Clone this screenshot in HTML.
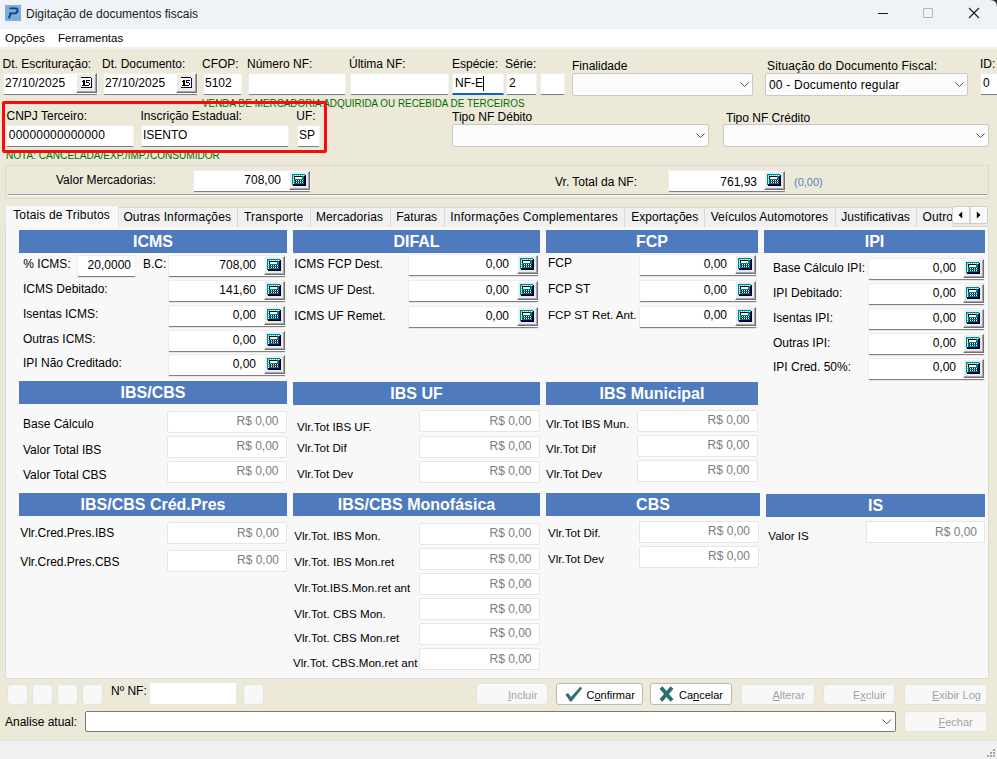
<!DOCTYPE html><html><head><meta charset="utf-8"><style>
html,body{margin:0;padding:0;}
body{width:997px;height:759px;overflow:hidden;position:relative;background:#ece9d8;font-family:"Liberation Sans", sans-serif;}
.t{position:absolute;white-space:nowrap;font-family:"Liberation Sans", sans-serif;}
.b{position:absolute;}
u{text-decoration:underline;text-underline-offset:1px;}
</style></head><body>
<svg width="0" height="0" style="position:absolute">
<defs>
<g id="calc"><rect x="0" y="0" width="13" height="11" fill="#008080"/><rect x="1" y="1" width="12" height="1" fill="#00ffff"/><rect x="1" y="1" width="1" height="1" fill="#fff"/><rect x="3" y="1" width="1" height="1" fill="#fff"/><rect x="5" y="1" width="1" height="1" fill="#fff"/><rect x="7" y="1" width="1" height="1" fill="#fff"/><rect x="9" y="1" width="1" height="1" fill="#fff"/><rect x="11" y="1" width="1" height="1" fill="#fff"/><rect x="1" y="1" width="1" height="9" fill="#00ffff"/><rect x="1" y="3" width="1" height="1" fill="#fff"/><rect x="1" y="5" width="1" height="1" fill="#fff"/><rect x="1" y="7" width="1" height="1" fill="#fff"/><rect x="1" y="9" width="1" height="1" fill="#fff"/><rect x="2" y="2" width="8" height="1" fill="#000"/><rect x="2" y="2" width="1" height="3" fill="#000"/><rect x="3" y="3" width="7" height="2" fill="#fff"/><rect x="3" y="6" width="9" height="1" fill="#000"/><rect x="4" y="6" width="1" height="1" fill="#fff"/><rect x="6" y="6" width="1" height="1" fill="#fff"/><rect x="8" y="6" width="1" height="1" fill="#fff"/><rect x="10" y="6" width="1" height="1" fill="#fff"/><rect x="3" y="8" width="9" height="1" fill="#000"/><rect x="4" y="8" width="1" height="1" fill="#fff"/><rect x="6" y="8" width="1" height="1" fill="#fff"/><rect x="8" y="8" width="1" height="1" fill="#fff"/><rect x="10" y="8" width="1" height="1" fill="#fff"/><rect x="1" y="10" width="12" height="1" fill="#000080"/><rect x="12" y="2" width="1" height="9" fill="#000080"/><rect x="13" y="1" width="1" height="11" fill="#000"/><rect x="1" y="11" width="12" height="1" fill="#000"/></g>
<g id="cal15">
<rect x="0" y="0" width="11" height="11" fill="#fff"/>
<rect x="0" y="0" width="10" height="1" fill="#000"/>
<rect x="10" y="1" width="1" height="10" fill="#00007a"/>
<rect x="0" y="10" width="11" height="1" fill="#000"/>
<rect x="2" y="10" width="1" height="1" fill="#1a1aa0"/><rect x="5" y="10" width="1" height="1" fill="#1a1aa0"/><rect x="8" y="10" width="1" height="1" fill="#1a1aa0"/>
<g fill="#000"><rect x="2" y="3" width="2" height="5"/><rect x="1" y="4" width="1" height="1"/><rect x="1" y="8" width="4" height="1"/><rect x="5" y="3" width="4" height="1"/><rect x="5" y="3" width="1" height="3"/><rect x="5" y="5" width="3" height="1"/><rect x="8" y="6" width="1" height="2"/><rect x="7" y="5" width="1" height="1"/><rect x="5" y="8" width="3" height="1"/></g>
</g>
</defs></svg>

<div class="b" style="left:0px;top:0px;width:997px;height:29px;background:#eff3f8;"></div>
<svg class="b" style="left:5px;top:5px" width="16" height="16"><rect width="16" height="16" fill="#7aaedb"/><path d="M5.3 3.4 L10.5 3.4 C12.6 3.4 12.8 4.6 12.4 6.2 C12 7.8 10.8 8.4 9 8.4 L5 8.4 M6 8.4 L4 12.6" fill="none" stroke="#0d3f86" stroke-width="1.9" stroke-linecap="round" stroke-linejoin="round"/></svg>
<div class="t " style="left:26px;top:6.50px;font-size:12px;line-height:14px;color:#1a1a1a;font-weight:normal;">Digitação de documentos fiscais</div>
<div class="b" style="left:878px;top:13px;width:10px;height:1px;background:#1a1a1a;"></div>
<div class="b" style="left:923px;top:8px;width:10px;height:10px;border:1px solid #b5b5b5;box-sizing:border-box;border-radius:1px;"></div>
<svg class="b" style="left:968px;top:7px" width="12" height="12"><path d="M1 1 L11 11 M11 1 L1 11" stroke="#1a1a1a" stroke-width="1.1"/></svg>
<svg class="b" style="left:990px;top:0px" width="7" height="7"><path d="M0 0 L7 0 L7 7 Q7 0 0 0Z" fill="#2b2b2b"/></svg>
<div class="b" style="left:0px;top:29px;width:997px;height:18px;background:#fff;"></div>
<div class="b" style="left:0px;top:47px;width:997px;height:2px;background:#efefef;"></div>
<div class="t " style="left:5px;top:32.20px;font-size:11.5px;line-height:13px;color:#000;font-weight:normal;">Opções</div>
<div class="t " style="left:58px;top:32.20px;font-size:11.5px;line-height:13px;color:#000;font-weight:normal;">Ferramentas</div>
<div class="t " style="left:2.5px;top:57.00px;font-size:12px;line-height:14px;color:#000;font-weight:normal;">Dt. Escrituração:</div>
<div class="t " style="left:102px;top:57.00px;font-size:12px;line-height:14px;color:#000;font-weight:normal;">Dt. Documento:</div>
<div class="t " style="left:202px;top:57.00px;font-size:12px;line-height:14px;color:#000;font-weight:normal;">CFOP:</div>
<div class="t " style="left:247px;top:57.00px;font-size:12px;line-height:14px;color:#000;font-weight:normal;">Número NF:</div>
<div class="t " style="left:349px;top:57.00px;font-size:12px;line-height:14px;color:#000;font-weight:normal;">Última NF:</div>
<div class="t " style="left:452px;top:57.00px;font-size:12px;line-height:14px;color:#000;font-weight:normal;">Espécie:</div>
<div class="t " style="left:505px;top:57.00px;font-size:12px;line-height:14px;color:#000;font-weight:normal;">Série:</div>
<div class="t " style="left:572px;top:59.00px;font-size:12px;line-height:14px;color:#000;font-weight:normal;">Finalidade</div>
<div class="t " style="left:767px;top:59.00px;font-size:12px;line-height:14px;color:#000;font-weight:normal;letter-spacing:0.14px;">Situação do Documento Fiscal:</div>
<div class="t " style="left:980px;top:57.00px;font-size:12px;line-height:14px;color:#000;font-weight:normal;">ID:</div>
<div class="b" style="left:3px;top:73px;width:95px;height:22px;background:#fff;border-top:1px solid #ececec;border-left:1px solid #ececec;border-right:1px solid #f2f2f2;border-bottom:1px solid #7f7f7f;box-shadow:0 1px 0 #e4e4e4;box-sizing:border-box;border-radius:2px;"></div>
<div class="b" style="left:76px;top:73px;width:21px;height:20px;background:#ebebeb;border-top:1px solid #fff;border-left:1px solid #fff;border-right:1px solid #6f6f6f;border-bottom:1px solid #6f6f6f;box-shadow:inset -1px -1px 0 #a8a8a8;box-sizing:border-box;"></div>
<svg class="b" style="left:81px;top:77px" width="12" height="12"><use href="#cal15"/></svg>
<div class="t " style="left:5px;top:76.00px;font-size:12px;line-height:14px;color:#000;font-weight:normal;">27/10/2025</div>
<div class="b" style="left:103px;top:73px;width:95px;height:22px;background:#fff;border-top:1px solid #ececec;border-left:1px solid #ececec;border-right:1px solid #f2f2f2;border-bottom:1px solid #7f7f7f;box-shadow:0 1px 0 #e4e4e4;box-sizing:border-box;border-radius:2px;"></div>
<div class="b" style="left:176px;top:73px;width:21px;height:20px;background:#ebebeb;border-top:1px solid #fff;border-left:1px solid #fff;border-right:1px solid #6f6f6f;border-bottom:1px solid #6f6f6f;box-shadow:inset -1px -1px 0 #a8a8a8;box-sizing:border-box;"></div>
<svg class="b" style="left:181px;top:77px" width="12" height="12"><use href="#cal15"/></svg>
<div class="t " style="left:105px;top:76.00px;font-size:12px;line-height:14px;color:#000;font-weight:normal;">27/10/2025</div>
<div class="b" style="left:203px;top:73px;width:39px;height:22px;background:#fff;border-top:1px solid #ececec;border-left:1px solid #ececec;border-right:1px solid #f2f2f2;border-bottom:1px solid #7f7f7f;box-shadow:0 1px 0 #e4e4e4;box-sizing:border-box;border-radius:2px;"></div>
<div class="t " style="left:205px;top:76.00px;font-size:12px;line-height:14px;color:#000;font-weight:normal;">5102</div>
<div class="b" style="left:248px;top:73px;width:98px;height:22px;background:#fff;border-top:1px solid #ececec;border-left:1px solid #ececec;border-right:1px solid #f2f2f2;border-bottom:1px solid #7f7f7f;box-shadow:0 1px 0 #e4e4e4;box-sizing:border-box;border-radius:2px;"></div>
<div class="b" style="left:350px;top:73px;width:99px;height:22px;background:#fff;border-top:1px solid #ececec;border-left:1px solid #ececec;border-right:1px solid #f2f2f2;border-bottom:1px solid #7f7f7f;box-shadow:0 1px 0 #e4e4e4;box-sizing:border-box;border-radius:2px;"></div>
<div class="b" style="left:452px;top:73px;width:52px;height:22px;background:#fff;border-top:1px solid #ececec;border-left:1px solid #ececec;border-right:1px solid #f2f2f2;border-bottom:2px solid #0f62c4;box-sizing:border-box;border-radius:2px 2px 0 0;"></div>
<div class="t " style="left:455px;top:76.00px;font-size:12px;line-height:14px;color:#000;font-weight:normal;">NF-E</div>
<div class="b" style="left:483px;top:76px;width:1px;height:15px;background:#000;"></div>
<div class="b" style="left:506px;top:73px;width:31px;height:22px;background:#fff;border-top:1px solid #ececec;border-left:1px solid #ececec;border-right:1px solid #f2f2f2;border-bottom:1px solid #7f7f7f;box-shadow:0 1px 0 #e4e4e4;box-sizing:border-box;border-radius:2px;"></div>
<div class="t " style="left:509px;top:76.00px;font-size:12px;line-height:14px;color:#000;font-weight:normal;">2</div>
<div class="b" style="left:540px;top:73px;width:25px;height:22px;background:#fff;border-top:1px solid #ececec;border-left:1px solid #ececec;border-right:1px solid #f2f2f2;border-bottom:1px solid #7f7f7f;box-shadow:0 1px 0 #e4e4e4;box-sizing:border-box;border-radius:2px;"></div>
<div class="b" style="left:572px;top:73px;width:181px;height:23px;background:#fcfcfc;border:1px solid #c9c9c9;box-sizing:border-box;border-radius:2px;"></div>
<svg class="b" style="left:739.5px;top:82.0px" width="10" height="6"><path d="M0.5 0.5 L4.5 4.5 L8.5 0.5" fill="none" stroke="#404040" stroke-width="0.9"/></svg>
<div class="b" style="left:765px;top:73px;width:203px;height:23px;background:#fcfcfc;border:1px solid #c9c9c9;box-sizing:border-box;border-radius:2px;"></div>
<svg class="b" style="left:954.5px;top:82.0px" width="10" height="6"><path d="M0.5 0.5 L4.5 4.5 L8.5 0.5" fill="none" stroke="#404040" stroke-width="0.9"/></svg>
<div class="t " style="left:769px;top:78.30px;font-size:12px;line-height:14px;color:#000;font-weight:normal;letter-spacing:0.2px;">00 - Documento regular</div>
<div class="b" style="left:980px;top:73px;width:20px;height:22px;background:#fff;border-top:1px solid #ececec;border-left:1px solid #ececec;border-right:1px solid #f2f2f2;border-bottom:1px solid #7f7f7f;box-shadow:0 1px 0 #e4e4e4;box-sizing:border-box;border-radius:2px;"></div>
<div class="t " style="left:983px;top:76.00px;font-size:12px;line-height:14px;color:#000;font-weight:normal;">0</div>
<div class="t " style="left:202.3px;top:96.00px;font-size:11.7px;line-height:13px;color:#006c00;font-weight:normal;transform:scaleX(0.845);transform-origin:0 0;">VENDA DE MERCADORIA ADQUIRIDA OU RECEBIDA DE TERCEIROS</div>
<div class="t " style="left:6.5px;top:109.00px;font-size:12px;line-height:14px;color:#000;font-weight:normal;">CNPJ Terceiro:</div>
<div class="t " style="left:140.5px;top:109.00px;font-size:12px;line-height:14px;color:#000;font-weight:normal;">Inscrição Estadual:</div>
<div class="t " style="left:296.3px;top:109.00px;font-size:12px;line-height:14px;color:#000;font-weight:normal;">UF:</div>
<div class="b" style="left:6px;top:125px;width:128px;height:22px;background:#fff;border-top:1px solid #ececec;border-left:1px solid #ececec;border-right:1px solid #f2f2f2;border-bottom:1px solid #7f7f7f;box-shadow:0 1px 0 #e4e4e4;box-sizing:border-box;border-radius:2px;"></div>
<div class="t " style="left:8.8px;top:128.00px;font-size:12px;line-height:14px;color:#000;font-weight:normal;letter-spacing:0.2px;">00000000000000</div>
<div class="b" style="left:141px;top:125px;width:148px;height:22px;background:#fff;border-top:1px solid #ececec;border-left:1px solid #ececec;border-right:1px solid #f2f2f2;border-bottom:1px solid #7f7f7f;box-shadow:0 1px 0 #e4e4e4;box-sizing:border-box;border-radius:2px;"></div>
<div class="t " style="left:143px;top:128.00px;font-size:12px;line-height:14px;color:#000;font-weight:normal;">ISENTO</div>
<div class="b" style="left:297px;top:125px;width:23px;height:22px;background:#fff;border-top:1px solid #ececec;border-left:1px solid #ececec;border-right:1px solid #f2f2f2;border-bottom:1px solid #7f7f7f;box-shadow:0 1px 0 #e4e4e4;box-sizing:border-box;border-radius:2px;"></div>
<div class="t " style="left:299px;top:128.00px;font-size:12px;line-height:14px;color:#000;font-weight:normal;">SP</div>
<div class="t " style="left:452px;top:110.00px;font-size:12px;line-height:14px;color:#000;font-weight:normal;">Tipo NF Débito</div>
<div class="t " style="left:726px;top:110.50px;font-size:12px;line-height:14px;color:#000;font-weight:normal;">Tipo NF Crédito</div>
<div class="b" style="left:452px;top:124px;width:257px;height:23px;background:#fcfcfc;border:1px solid #c9c9c9;box-sizing:border-box;border-radius:2px;"></div>
<svg class="b" style="left:695.5px;top:133.0px" width="10" height="6"><path d="M0.5 0.5 L4.5 4.5 L8.5 0.5" fill="none" stroke="#404040" stroke-width="0.9"/></svg>
<div class="b" style="left:723px;top:124px;width:266px;height:23px;background:#fcfcfc;border:1px solid #c9c9c9;box-sizing:border-box;border-radius:2px;"></div>
<svg class="b" style="left:975.5px;top:133.0px" width="10" height="6"><path d="M0.5 0.5 L4.5 4.5 L8.5 0.5" fill="none" stroke="#404040" stroke-width="0.9"/></svg>
<div class="t " style="left:6px;top:148.00px;font-size:11.7px;line-height:13px;color:#006c00;font-weight:normal;transform:scaleX(0.862);transform-origin:0 0;">NOTA: CANCELADA/EXP./IMP./CONSUMIDOR</div>
<div class="b" style="left:2px;top:101px;width:325px;height:52px;border:3px solid #fa0a0a;box-sizing:border-box;border-radius:2px;"></div>
<div class="b" style="left:5px;top:165px;width:984px;height:34px;border:1px solid #d9d9d6;box-sizing:border-box;"></div>
<div class="b" style="left:8px;top:194px;width:979px;height:1px;background:#9d9d9d;"></div>
<div class="b" style="left:8px;top:195px;width:979px;height:1px;background:#fff;"></div>
<div class="t " style="left:56px;top:173.00px;font-size:12px;line-height:14px;color:#000;font-weight:normal;">Valor Mercadorias:</div>
<div class="b" style="left:193px;top:170px;width:118px;height:22px;background:#fff;border-top:1px solid #ececec;border-left:1px solid #ececec;border-right:1px solid #f2f2f2;border-bottom:1px solid #7f7f7f;box-shadow:0 1px 0 #e4e4e4;box-sizing:border-box;border-radius:2px;"></div>
<div class="b" style="left:289px;top:171px;width:21px;height:19px;background:#ebebeb;border-top:1px solid #fff;border-left:1px solid #fff;border-right:1px solid #6f6f6f;border-bottom:1px solid #6f6f6f;box-shadow:inset -1px -1px 0 #a8a8a8;box-sizing:border-box;"></div>
<svg class="b" style="left:292px;top:174px" width="14" height="12"><use href="#calc"/></svg>
<div class="t" style="right:716px;top:173.00px;font-size:12px;line-height:14px;color:#000;font-weight:normal;text-align:right;">708,00</div>
<div class="t " style="left:555px;top:174.50px;font-size:12px;line-height:14px;color:#000;font-weight:normal;">Vr. Total da NF:</div>
<div class="b" style="left:668px;top:170px;width:118px;height:22px;background:#fff;border-top:1px solid #ececec;border-left:1px solid #ececec;border-right:1px solid #f2f2f2;border-bottom:1px solid #7f7f7f;box-shadow:0 1px 0 #e4e4e4;box-sizing:border-box;border-radius:2px;"></div>
<div class="b" style="left:764px;top:171px;width:21px;height:19px;background:#ebebeb;border-top:1px solid #fff;border-left:1px solid #fff;border-right:1px solid #6f6f6f;border-bottom:1px solid #6f6f6f;box-shadow:inset -1px -1px 0 #a8a8a8;box-sizing:border-box;"></div>
<svg class="b" style="left:767px;top:174px" width="14" height="12"><use href="#calc"/></svg>
<div class="t" style="right:240px;top:174.50px;font-size:12px;line-height:14px;color:#000;font-weight:normal;text-align:right;">761,93</div>
<div class="t " style="left:794px;top:176.00px;font-size:11px;line-height:13px;color:#5b82c0;font-weight:normal;">(0,00)</div>
<div class="b" style="left:5px;top:226px;width:984px;height:453px;background:#f8f8f8;border:1px solid #dadada;box-sizing:border-box;"></div>
<div class="b" style="left:5px;top:205px;width:947px;height:22px;overflow:hidden;">
<div class="b" style="left:113px;top:2px;width:120px;height:20px;background:#f0f0f0;border:1px solid #d9d9d9;border-bottom:none;box-sizing:border-box;"></div>
<div class="t" style="left:118.4px;top:5px;font-size:12px;line-height:14px;color:#000;letter-spacing:0.13px;">Outras Informações</div>
<div class="b" style="left:232px;top:2px;width:73.5px;height:20px;background:#f0f0f0;border:1px solid #d9d9d9;border-bottom:none;box-sizing:border-box;"></div>
<div class="t" style="left:239px;top:5px;font-size:12px;line-height:14px;color:#000;letter-spacing:0.18px;">Transporte</div>
<div class="b" style="left:304.5px;top:2px;width:81.0px;height:20px;background:#f0f0f0;border:1px solid #d9d9d9;border-bottom:none;box-sizing:border-box;"></div>
<div class="t" style="left:311px;top:5px;font-size:12px;line-height:14px;color:#000;letter-spacing:0.09px;">Mercadorias</div>
<div class="b" style="left:384.5px;top:2px;width:55.0px;height:20px;background:#f0f0f0;border:1px solid #d9d9d9;border-bottom:none;box-sizing:border-box;"></div>
<div class="t" style="left:391.2px;top:5px;font-size:12px;line-height:14px;color:#000;letter-spacing:0.04px;">Faturas</div>
<div class="b" style="left:438.5px;top:2px;width:181.5px;height:20px;background:#f0f0f0;border:1px solid #d9d9d9;border-bottom:none;box-sizing:border-box;"></div>
<div class="t" style="left:445.2px;top:5px;font-size:12px;line-height:14px;color:#000;letter-spacing:0.27px;">Informações Complementares</div>
<div class="b" style="left:619px;top:2px;width:81px;height:20px;background:#f0f0f0;border:1px solid #d9d9d9;border-bottom:none;box-sizing:border-box;"></div>
<div class="t" style="left:626.3px;top:5px;font-size:12px;line-height:14px;color:#000;letter-spacing:0.03px;">Exportações</div>
<div class="b" style="left:699px;top:2px;width:132px;height:20px;background:#f0f0f0;border:1px solid #d9d9d9;border-bottom:none;box-sizing:border-box;"></div>
<div class="t" style="left:705.7px;top:5px;font-size:12px;line-height:14px;color:#000;letter-spacing:0.06px;">Veículos Automotores</div>
<div class="b" style="left:830px;top:2px;width:82px;height:20px;background:#f0f0f0;border:1px solid #d9d9d9;border-bottom:none;box-sizing:border-box;"></div>
<div class="t" style="left:836.2px;top:5px;font-size:12px;line-height:14px;color:#000;letter-spacing:0.05px;">Justificativas</div>
<div class="b" style="left:911px;top:2px;width:65px;height:20px;background:#f0f0f0;border:1px solid #d9d9d9;border-bottom:none;box-sizing:border-box;"></div>
<div class="t" style="left:917.5px;top:5px;font-size:12px;line-height:14px;color:#000;letter-spacing:0.1px;">Outros</div>
</div>
<div class="b" style="left:5px;top:205px;width:114px;height:22px;background:#f8f8f8;border:1px solid #e2e2e2;border-bottom:none;box-sizing:border-box;"></div>
<div class="t " style="left:13.2px;top:208.00px;font-size:12px;line-height:14px;color:#000;font-weight:normal;letter-spacing:0.15px;">Totais de Tributos</div>
<div class="b" style="left:952px;top:206px;width:36px;height:18px;background:#fafafa;border:1px solid #cfcfcf;box-sizing:border-box;border-radius:2px;"></div>
<div class="b" style="left:969px;top:207px;width:2px;height:16px;background:#d6d6d6;"></div>
<svg class="b" style="left:958px;top:211px" width="5" height="8"><path d="M4.2 0.5 L0.5 4 L4.2 7.5Z" fill="#000"/></svg>
<svg class="b" style="left:976px;top:211px" width="5" height="8"><path d="M0.8 0.5 L4.5 4 L0.8 7.5Z" fill="#000"/></svg>
<div class="b" style="left:19px;top:230px;width:268px;height:23px;background:#4f7bbe;"></div>
<div class="t" style="left:19px;width:268px;top:233.30px;font-size:16px;line-height:18px;color:#fff;font-weight:bold;text-align:center;">ICMS</div>
<div class="t " style="left:23.3px;top:257.00px;font-size:12px;line-height:14px;color:#000;font-weight:normal;">% ICMS:</div>
<div class="b" style="left:77px;top:255px;width:59px;height:22px;background:#fff;border-top:1px solid #ececec;border-left:1px solid #ececec;border-right:1px solid #f2f2f2;border-bottom:1px solid #7f7f7f;box-shadow:0 1px 0 #e4e4e4;box-sizing:border-box;border-radius:2px;"></div>
<div class="t" style="right:866px;top:257.50px;font-size:12px;line-height:14px;color:#000;font-weight:normal;text-align:right;">20,0000</div>
<div class="t " style="left:143px;top:256.50px;font-size:12px;line-height:14px;color:#000;font-weight:normal;">B.C:</div>
<div class="b" style="left:168px;top:255px;width:118px;height:22px;background:#fff;border-top:1px solid #ececec;border-left:1px solid #ececec;border-right:1px solid #f2f2f2;border-bottom:1px solid #7f7f7f;box-shadow:0 1px 0 #e4e4e4;box-sizing:border-box;border-radius:2px;"></div>
<div class="b" style="left:264px;top:256px;width:21px;height:19px;background:#ebebeb;border-top:1px solid #fff;border-left:1px solid #fff;border-right:1px solid #6f6f6f;border-bottom:1px solid #6f6f6f;box-shadow:inset -1px -1px 0 #a8a8a8;box-sizing:border-box;"></div>
<svg class="b" style="left:267px;top:259px" width="14" height="12"><use href="#calc"/></svg>
<div class="t" style="right:741px;top:257.50px;font-size:12px;line-height:14px;color:#000;font-weight:normal;text-align:right;">708,00</div>
<div class="b" style="left:168px;top:280px;width:118px;height:22px;background:#fff;border-top:1px solid #ececec;border-left:1px solid #ececec;border-right:1px solid #f2f2f2;border-bottom:1px solid #7f7f7f;box-shadow:0 1px 0 #e4e4e4;box-sizing:border-box;border-radius:2px;"></div>
<div class="b" style="left:264px;top:281px;width:21px;height:19px;background:#ebebeb;border-top:1px solid #fff;border-left:1px solid #fff;border-right:1px solid #6f6f6f;border-bottom:1px solid #6f6f6f;box-shadow:inset -1px -1px 0 #a8a8a8;box-sizing:border-box;"></div>
<svg class="b" style="left:267px;top:284px" width="14" height="12"><use href="#calc"/></svg>
<div class="t" style="right:741px;top:282.50px;font-size:12px;line-height:14px;color:#000;font-weight:normal;text-align:right;">141,60</div>
<div class="t " style="left:23px;top:281.50px;font-size:12px;line-height:14px;color:#000;font-weight:normal;">ICMS Debitado:</div>
<div class="b" style="left:168px;top:305px;width:118px;height:22px;background:#fff;border-top:1px solid #ececec;border-left:1px solid #ececec;border-right:1px solid #f2f2f2;border-bottom:1px solid #7f7f7f;box-shadow:0 1px 0 #e4e4e4;box-sizing:border-box;border-radius:2px;"></div>
<div class="b" style="left:264px;top:306px;width:21px;height:19px;background:#ebebeb;border-top:1px solid #fff;border-left:1px solid #fff;border-right:1px solid #6f6f6f;border-bottom:1px solid #6f6f6f;box-shadow:inset -1px -1px 0 #a8a8a8;box-sizing:border-box;"></div>
<svg class="b" style="left:267px;top:309px" width="14" height="12"><use href="#calc"/></svg>
<div class="t" style="right:741px;top:307.50px;font-size:12px;line-height:14px;color:#000;font-weight:normal;text-align:right;">0,00</div>
<div class="t " style="left:23px;top:306.50px;font-size:12px;line-height:14px;color:#000;font-weight:normal;">Isentas ICMS:</div>
<div class="b" style="left:168px;top:330px;width:118px;height:22px;background:#fff;border-top:1px solid #ececec;border-left:1px solid #ececec;border-right:1px solid #f2f2f2;border-bottom:1px solid #7f7f7f;box-shadow:0 1px 0 #e4e4e4;box-sizing:border-box;border-radius:2px;"></div>
<div class="b" style="left:264px;top:331px;width:21px;height:19px;background:#ebebeb;border-top:1px solid #fff;border-left:1px solid #fff;border-right:1px solid #6f6f6f;border-bottom:1px solid #6f6f6f;box-shadow:inset -1px -1px 0 #a8a8a8;box-sizing:border-box;"></div>
<svg class="b" style="left:267px;top:334px" width="14" height="12"><use href="#calc"/></svg>
<div class="t" style="right:741px;top:332.50px;font-size:12px;line-height:14px;color:#000;font-weight:normal;text-align:right;">0,00</div>
<div class="t " style="left:23px;top:331.50px;font-size:12px;line-height:14px;color:#000;font-weight:normal;">Outras ICMS:</div>
<div class="b" style="left:168px;top:354px;width:118px;height:22px;background:#fff;border-top:1px solid #ececec;border-left:1px solid #ececec;border-right:1px solid #f2f2f2;border-bottom:1px solid #7f7f7f;box-shadow:0 1px 0 #e4e4e4;box-sizing:border-box;border-radius:2px;"></div>
<div class="b" style="left:264px;top:355px;width:21px;height:19px;background:#ebebeb;border-top:1px solid #fff;border-left:1px solid #fff;border-right:1px solid #6f6f6f;border-bottom:1px solid #6f6f6f;box-shadow:inset -1px -1px 0 #a8a8a8;box-sizing:border-box;"></div>
<svg class="b" style="left:267px;top:358px" width="14" height="12"><use href="#calc"/></svg>
<div class="t" style="right:741px;top:356.50px;font-size:12px;line-height:14px;color:#000;font-weight:normal;text-align:right;">0,00</div>
<div class="t " style="left:23px;top:355.50px;font-size:12px;line-height:14px;color:#000;font-weight:normal;">IPI Não Creditado:</div>
<div class="b" style="left:293px;top:230px;width:247px;height:23px;background:#4f7bbe;"></div>
<div class="t" style="left:293px;width:247px;top:233.30px;font-size:16px;line-height:18px;color:#fff;font-weight:bold;text-align:center;">DIFAL</div>
<div class="t " style="left:294.3px;top:257.00px;font-size:12px;line-height:14px;color:#000;font-weight:normal;">ICMS FCP Dest.</div>
<div class="b" style="left:408px;top:254px;width:131px;height:22px;background:#fff;border-top:1px solid #ececec;border-left:1px solid #ececec;border-right:1px solid #f2f2f2;border-bottom:1px solid #7f7f7f;box-shadow:0 1px 0 #e4e4e4;box-sizing:border-box;border-radius:2px;"></div>
<div class="b" style="left:517px;top:255px;width:21px;height:19px;background:#ebebeb;border-top:1px solid #fff;border-left:1px solid #fff;border-right:1px solid #6f6f6f;border-bottom:1px solid #6f6f6f;box-shadow:inset -1px -1px 0 #a8a8a8;box-sizing:border-box;"></div>
<svg class="b" style="left:520px;top:258px" width="14" height="12"><use href="#calc"/></svg>
<div class="t" style="right:488px;top:256.50px;font-size:12px;line-height:14px;color:#000;font-weight:normal;text-align:right;">0,00</div>
<div class="t " style="left:294.3px;top:283.00px;font-size:12px;line-height:14px;color:#000;font-weight:normal;">ICMS UF Dest.</div>
<div class="b" style="left:408px;top:280px;width:131px;height:22px;background:#fff;border-top:1px solid #ececec;border-left:1px solid #ececec;border-right:1px solid #f2f2f2;border-bottom:1px solid #7f7f7f;box-shadow:0 1px 0 #e4e4e4;box-sizing:border-box;border-radius:2px;"></div>
<div class="b" style="left:517px;top:281px;width:21px;height:19px;background:#ebebeb;border-top:1px solid #fff;border-left:1px solid #fff;border-right:1px solid #6f6f6f;border-bottom:1px solid #6f6f6f;box-shadow:inset -1px -1px 0 #a8a8a8;box-sizing:border-box;"></div>
<svg class="b" style="left:520px;top:284px" width="14" height="12"><use href="#calc"/></svg>
<div class="t" style="right:488px;top:282.50px;font-size:12px;line-height:14px;color:#000;font-weight:normal;text-align:right;">0,00</div>
<div class="t " style="left:294.3px;top:309.00px;font-size:12px;line-height:14px;color:#000;font-weight:normal;">ICMS UF Remet.</div>
<div class="b" style="left:408px;top:306px;width:131px;height:22px;background:#fff;border-top:1px solid #ececec;border-left:1px solid #ececec;border-right:1px solid #f2f2f2;border-bottom:1px solid #7f7f7f;box-shadow:0 1px 0 #e4e4e4;box-sizing:border-box;border-radius:2px;"></div>
<div class="b" style="left:517px;top:307px;width:21px;height:19px;background:#ebebeb;border-top:1px solid #fff;border-left:1px solid #fff;border-right:1px solid #6f6f6f;border-bottom:1px solid #6f6f6f;box-shadow:inset -1px -1px 0 #a8a8a8;box-sizing:border-box;"></div>
<svg class="b" style="left:520px;top:310px" width="14" height="12"><use href="#calc"/></svg>
<div class="t" style="right:488px;top:308.50px;font-size:12px;line-height:14px;color:#000;font-weight:normal;text-align:right;">0,00</div>
<div class="b" style="left:546px;top:230px;width:212px;height:23px;background:#4f7bbe;"></div>
<div class="t" style="left:546px;width:212px;top:233.30px;font-size:16px;line-height:18px;color:#fff;font-weight:bold;text-align:center;">FCP</div>
<div class="t " style="left:548px;top:255.50px;font-size:12px;line-height:14px;color:#000;font-weight:normal;">FCP</div>
<div class="b" style="left:639px;top:254px;width:118px;height:22px;background:#fff;border-top:1px solid #ececec;border-left:1px solid #ececec;border-right:1px solid #f2f2f2;border-bottom:1px solid #7f7f7f;box-shadow:0 1px 0 #e4e4e4;box-sizing:border-box;border-radius:2px;"></div>
<div class="b" style="left:735px;top:255px;width:21px;height:19px;background:#ebebeb;border-top:1px solid #fff;border-left:1px solid #fff;border-right:1px solid #6f6f6f;border-bottom:1px solid #6f6f6f;box-shadow:inset -1px -1px 0 #a8a8a8;box-sizing:border-box;"></div>
<svg class="b" style="left:738px;top:258px" width="14" height="12"><use href="#calc"/></svg>
<div class="t" style="right:270px;top:256.50px;font-size:12px;line-height:14px;color:#000;font-weight:normal;text-align:right;">0,00</div>
<div class="t " style="left:548px;top:281.50px;font-size:12px;line-height:14px;color:#000;font-weight:normal;">FCP ST</div>
<div class="b" style="left:639px;top:280px;width:118px;height:22px;background:#fff;border-top:1px solid #ececec;border-left:1px solid #ececec;border-right:1px solid #f2f2f2;border-bottom:1px solid #7f7f7f;box-shadow:0 1px 0 #e4e4e4;box-sizing:border-box;border-radius:2px;"></div>
<div class="b" style="left:735px;top:281px;width:21px;height:19px;background:#ebebeb;border-top:1px solid #fff;border-left:1px solid #fff;border-right:1px solid #6f6f6f;border-bottom:1px solid #6f6f6f;box-shadow:inset -1px -1px 0 #a8a8a8;box-sizing:border-box;"></div>
<svg class="b" style="left:738px;top:284px" width="14" height="12"><use href="#calc"/></svg>
<div class="t" style="right:270px;top:282.50px;font-size:12px;line-height:14px;color:#000;font-weight:normal;text-align:right;">0,00</div>
<div class="t " style="left:548px;top:308.00px;font-size:11.6px;line-height:13px;color:#000;font-weight:normal;">FCP ST Ret. Ant.</div>
<div class="b" style="left:639px;top:305.5px;width:118px;height:22.0px;background:#fff;border-top:1px solid #ececec;border-left:1px solid #ececec;border-right:1px solid #f2f2f2;border-bottom:1px solid #7f7f7f;box-shadow:0 1px 0 #e4e4e4;box-sizing:border-box;border-radius:2px;"></div>
<div class="b" style="left:735px;top:306.5px;width:21px;height:19.0px;background:#ebebeb;border-top:1px solid #fff;border-left:1px solid #fff;border-right:1px solid #6f6f6f;border-bottom:1px solid #6f6f6f;box-shadow:inset -1px -1px 0 #a8a8a8;box-sizing:border-box;"></div>
<svg class="b" style="left:738px;top:309.5px" width="14" height="12"><use href="#calc"/></svg>
<div class="t" style="right:270px;top:308.00px;font-size:12px;line-height:14px;color:#000;font-weight:normal;text-align:right;">0,00</div>
<div class="b" style="left:764px;top:230px;width:221px;height:23px;background:#4f7bbe;"></div>
<div class="t" style="left:764px;width:221px;top:233.30px;font-size:16px;line-height:18px;color:#fff;font-weight:bold;text-align:center;">IPI</div>
<div class="t " style="left:773px;top:260.50px;font-size:12px;line-height:14px;color:#000;font-weight:normal;">Base Cálculo IPI:</div>
<div class="b" style="left:868px;top:258px;width:117px;height:22px;background:#fff;border-top:1px solid #ececec;border-left:1px solid #ececec;border-right:1px solid #f2f2f2;border-bottom:1px solid #7f7f7f;box-shadow:0 1px 0 #e4e4e4;box-sizing:border-box;border-radius:2px;"></div>
<div class="b" style="left:963px;top:259px;width:21px;height:19px;background:#ebebeb;border-top:1px solid #fff;border-left:1px solid #fff;border-right:1px solid #6f6f6f;border-bottom:1px solid #6f6f6f;box-shadow:inset -1px -1px 0 #a8a8a8;box-sizing:border-box;"></div>
<svg class="b" style="left:966px;top:262px" width="14" height="12"><use href="#calc"/></svg>
<div class="t" style="right:41px;top:260.50px;font-size:12px;line-height:14px;color:#000;font-weight:normal;text-align:right;">0,00</div>
<div class="t " style="left:773px;top:285.50px;font-size:12px;line-height:14px;color:#000;font-weight:normal;">IPI Debitado:</div>
<div class="b" style="left:868px;top:283px;width:117px;height:22px;background:#fff;border-top:1px solid #ececec;border-left:1px solid #ececec;border-right:1px solid #f2f2f2;border-bottom:1px solid #7f7f7f;box-shadow:0 1px 0 #e4e4e4;box-sizing:border-box;border-radius:2px;"></div>
<div class="b" style="left:963px;top:284px;width:21px;height:19px;background:#ebebeb;border-top:1px solid #fff;border-left:1px solid #fff;border-right:1px solid #6f6f6f;border-bottom:1px solid #6f6f6f;box-shadow:inset -1px -1px 0 #a8a8a8;box-sizing:border-box;"></div>
<svg class="b" style="left:966px;top:287px" width="14" height="12"><use href="#calc"/></svg>
<div class="t" style="right:41px;top:285.50px;font-size:12px;line-height:14px;color:#000;font-weight:normal;text-align:right;">0,00</div>
<div class="t " style="left:773px;top:310.50px;font-size:12px;line-height:14px;color:#000;font-weight:normal;">Isentas IPI:</div>
<div class="b" style="left:868px;top:308px;width:117px;height:22px;background:#fff;border-top:1px solid #ececec;border-left:1px solid #ececec;border-right:1px solid #f2f2f2;border-bottom:1px solid #7f7f7f;box-shadow:0 1px 0 #e4e4e4;box-sizing:border-box;border-radius:2px;"></div>
<div class="b" style="left:963px;top:309px;width:21px;height:19px;background:#ebebeb;border-top:1px solid #fff;border-left:1px solid #fff;border-right:1px solid #6f6f6f;border-bottom:1px solid #6f6f6f;box-shadow:inset -1px -1px 0 #a8a8a8;box-sizing:border-box;"></div>
<svg class="b" style="left:966px;top:312px" width="14" height="12"><use href="#calc"/></svg>
<div class="t" style="right:41px;top:310.50px;font-size:12px;line-height:14px;color:#000;font-weight:normal;text-align:right;">0,00</div>
<div class="t " style="left:773px;top:335.50px;font-size:12px;line-height:14px;color:#000;font-weight:normal;">Outras IPI:</div>
<div class="b" style="left:868px;top:333px;width:117px;height:22px;background:#fff;border-top:1px solid #ececec;border-left:1px solid #ececec;border-right:1px solid #f2f2f2;border-bottom:1px solid #7f7f7f;box-shadow:0 1px 0 #e4e4e4;box-sizing:border-box;border-radius:2px;"></div>
<div class="b" style="left:963px;top:334px;width:21px;height:19px;background:#ebebeb;border-top:1px solid #fff;border-left:1px solid #fff;border-right:1px solid #6f6f6f;border-bottom:1px solid #6f6f6f;box-shadow:inset -1px -1px 0 #a8a8a8;box-sizing:border-box;"></div>
<svg class="b" style="left:966px;top:337px" width="14" height="12"><use href="#calc"/></svg>
<div class="t" style="right:41px;top:335.50px;font-size:12px;line-height:14px;color:#000;font-weight:normal;text-align:right;">0,00</div>
<div class="t " style="left:773px;top:360.00px;font-size:12px;line-height:14px;color:#000;font-weight:normal;">IPI Cred. 50%:</div>
<div class="b" style="left:868px;top:357.5px;width:117px;height:22.0px;background:#fff;border-top:1px solid #ececec;border-left:1px solid #ececec;border-right:1px solid #f2f2f2;border-bottom:1px solid #7f7f7f;box-shadow:0 1px 0 #e4e4e4;box-sizing:border-box;border-radius:2px;"></div>
<div class="b" style="left:963px;top:358.5px;width:21px;height:19.0px;background:#ebebeb;border-top:1px solid #fff;border-left:1px solid #fff;border-right:1px solid #6f6f6f;border-bottom:1px solid #6f6f6f;box-shadow:inset -1px -1px 0 #a8a8a8;box-sizing:border-box;"></div>
<svg class="b" style="left:966px;top:361.5px" width="14" height="12"><use href="#calc"/></svg>
<div class="t" style="right:41px;top:360.00px;font-size:12px;line-height:14px;color:#000;font-weight:normal;text-align:right;">0,00</div>
<div class="b" style="left:19px;top:381px;width:268px;height:23px;background:#4f7bbe;"></div>
<div class="t" style="left:19px;width:268px;top:384.30px;font-size:16px;line-height:18px;color:#fff;font-weight:bold;text-align:center;">IBS/CBS</div>
<div class="t " style="left:23px;top:417.00px;font-size:12px;line-height:14px;color:#000;font-weight:normal;">Base Cálculo</div>
<div class="b" style="left:166.5px;top:410.5px;width:120.0px;height:22.0px;background:#fff;border:1px solid #e6e6e6;box-sizing:border-box;border-radius:2px;"></div>
<div class="t" style="right:718.5px;top:414.00px;font-size:12px;line-height:14px;color:#7d7d7d;font-weight:normal;text-align:right;">R$ 0,00</div>
<div class="t " style="left:23px;top:442.50px;font-size:12px;line-height:14px;color:#000;font-weight:normal;">Valor Total IBS</div>
<div class="b" style="left:166.5px;top:435.5px;width:120.0px;height:22.0px;background:#fff;border:1px solid #e6e6e6;box-sizing:border-box;border-radius:2px;"></div>
<div class="t" style="right:718.5px;top:439.00px;font-size:12px;line-height:14px;color:#7d7d7d;font-weight:normal;text-align:right;">R$ 0,00</div>
<div class="t " style="left:23px;top:468.00px;font-size:12px;line-height:14px;color:#000;font-weight:normal;">Valor Total CBS</div>
<div class="b" style="left:166.5px;top:460.8px;width:120.0px;height:22.0px;background:#fff;border:1px solid #e6e6e6;box-sizing:border-box;border-radius:2px;"></div>
<div class="t" style="right:718.5px;top:464.30px;font-size:12px;line-height:14px;color:#7d7d7d;font-weight:normal;text-align:right;">R$ 0,00</div>
<div class="b" style="left:293px;top:382px;width:247px;height:23px;background:#4f7bbe;"></div>
<div class="t" style="left:293px;width:247px;top:385.30px;font-size:16px;line-height:18px;color:#fff;font-weight:bold;text-align:center;">IBS UF</div>
<div class="t " style="left:297px;top:420.30px;font-size:11.6px;line-height:13px;color:#000;font-weight:normal;">Vlr.Tot IBS UF.</div>
<div class="b" style="left:419px;top:410.4px;width:121px;height:22.0px;background:#fff;border:1px solid #e6e6e6;box-sizing:border-box;border-radius:2px;"></div>
<div class="t" style="right:465.5px;top:413.90px;font-size:12px;line-height:14px;color:#7d7d7d;font-weight:normal;text-align:right;">R$ 0,00</div>
<div class="t " style="left:297px;top:441.10px;font-size:11.6px;line-height:13px;color:#000;font-weight:normal;">Vlr.Tot Dif</div>
<div class="b" style="left:419px;top:435.6px;width:121px;height:22.0px;background:#fff;border:1px solid #e6e6e6;box-sizing:border-box;border-radius:2px;"></div>
<div class="t" style="right:465.5px;top:439.10px;font-size:12px;line-height:14px;color:#7d7d7d;font-weight:normal;text-align:right;">R$ 0,00</div>
<div class="t " style="left:297px;top:466.80px;font-size:11.6px;line-height:13px;color:#000;font-weight:normal;">Vlr.Tot Dev</div>
<div class="b" style="left:419px;top:460.6px;width:121px;height:22.0px;background:#fff;border:1px solid #e6e6e6;box-sizing:border-box;border-radius:2px;"></div>
<div class="t" style="right:465.5px;top:464.10px;font-size:12px;line-height:14px;color:#7d7d7d;font-weight:normal;text-align:right;">R$ 0,00</div>
<div class="b" style="left:546px;top:382px;width:212px;height:23px;background:#4f7bbe;"></div>
<div class="t" style="left:546px;width:212px;top:385.30px;font-size:16px;line-height:18px;color:#fff;font-weight:bold;text-align:center;">IBS Municipal</div>
<div class="t " style="left:546px;top:416.50px;font-size:11.6px;line-height:13px;color:#000;font-weight:normal;">Vlr.Tot IBS Mun.</div>
<div class="b" style="left:637px;top:409.6px;width:121px;height:22.0px;background:#fff;border:1px solid #e6e6e6;box-sizing:border-box;border-radius:2px;"></div>
<div class="t" style="right:247.5px;top:413.10px;font-size:12px;line-height:14px;color:#7d7d7d;font-weight:normal;text-align:right;">R$ 0,00</div>
<div class="t " style="left:546px;top:441.80px;font-size:11.6px;line-height:13px;color:#000;font-weight:normal;">Vlr.Tot Dif</div>
<div class="b" style="left:637px;top:434.5px;width:121px;height:22.0px;background:#fff;border:1px solid #e6e6e6;box-sizing:border-box;border-radius:2px;"></div>
<div class="t" style="right:247.5px;top:438.00px;font-size:12px;line-height:14px;color:#7d7d7d;font-weight:normal;text-align:right;">R$ 0,00</div>
<div class="t " style="left:546px;top:467.20px;font-size:11.6px;line-height:13px;color:#000;font-weight:normal;">Vlr.Tot Dev</div>
<div class="b" style="left:637px;top:459.7px;width:121px;height:22.0px;background:#fff;border:1px solid #e6e6e6;box-sizing:border-box;border-radius:2px;"></div>
<div class="t" style="right:247.5px;top:463.20px;font-size:12px;line-height:14px;color:#7d7d7d;font-weight:normal;text-align:right;">R$ 0,00</div>
<div class="b" style="left:19px;top:493px;width:268px;height:23px;background:#4f7bbe;"></div>
<div class="t" style="left:19px;width:268px;top:496.30px;font-size:16px;line-height:18px;color:#fff;font-weight:bold;text-align:center;">IBS/CBS Créd.Pres</div>
<div class="t " style="left:20.2px;top:525.80px;font-size:12px;line-height:14px;color:#000;font-weight:normal;">Vlr.Cred.Pres.IBS</div>
<div class="b" style="left:167px;top:522.2px;width:120px;height:22.0px;background:#fff;border:1px solid #e6e6e6;box-sizing:border-box;border-radius:2px;"></div>
<div class="t" style="right:718px;top:525.70px;font-size:12px;line-height:14px;color:#7d7d7d;font-weight:normal;text-align:right;">R$ 0,00</div>
<div class="t " style="left:20.2px;top:554.90px;font-size:12px;line-height:14px;color:#000;font-weight:normal;">Vlr.Cred.Pres.CBS</div>
<div class="b" style="left:167px;top:549.6px;width:120px;height:22.0px;background:#fff;border:1px solid #e6e6e6;box-sizing:border-box;border-radius:2px;"></div>
<div class="t" style="right:718px;top:553.10px;font-size:12px;line-height:14px;color:#7d7d7d;font-weight:normal;text-align:right;">R$ 0,00</div>
<div class="b" style="left:293px;top:493px;width:247px;height:23px;background:#4f7bbe;"></div>
<div class="t" style="left:293px;width:247px;top:496.30px;font-size:16px;line-height:18px;color:#fff;font-weight:bold;text-align:center;">IBS/CBS Monofásica</div>
<div class="t " style="left:294.3px;top:529.00px;font-size:11.6px;line-height:13px;color:#000;font-weight:normal;">Vlr.Tot. IBS Mon.</div>
<div class="b" style="left:419px;top:522.7px;width:121px;height:22.0px;background:#fff;border:1px solid #e6e6e6;box-sizing:border-box;border-radius:2px;"></div>
<div class="t" style="right:465.5px;top:526.20px;font-size:12px;line-height:14px;color:#7d7d7d;font-weight:normal;text-align:right;">R$ 0,00</div>
<div class="t " style="left:294.3px;top:554.80px;font-size:11.6px;line-height:13px;color:#000;font-weight:normal;">Vlr.Tot. IBS Mon.ret</div>
<div class="b" style="left:419px;top:548px;width:121px;height:22px;background:#fff;border:1px solid #e6e6e6;box-sizing:border-box;border-radius:2px;"></div>
<div class="t" style="right:465.5px;top:551.50px;font-size:12px;line-height:14px;color:#7d7d7d;font-weight:normal;text-align:right;">R$ 0,00</div>
<div class="t " style="left:294.3px;top:580.80px;font-size:11.6px;line-height:13px;color:#000;font-weight:normal;">Vlr.Tot.IBS.Mon.ret ant</div>
<div class="b" style="left:419px;top:573.3px;width:121px;height:22.0px;background:#fff;border:1px solid #e6e6e6;box-sizing:border-box;border-radius:2px;"></div>
<div class="t" style="right:465.5px;top:576.80px;font-size:12px;line-height:14px;color:#7d7d7d;font-weight:normal;text-align:right;">R$ 0,00</div>
<div class="t " style="left:294.3px;top:606.60px;font-size:11.6px;line-height:13px;color:#000;font-weight:normal;">Vlr.Tot. CBS Mon.</div>
<div class="b" style="left:419px;top:598px;width:121px;height:22px;background:#fff;border:1px solid #e6e6e6;box-sizing:border-box;border-radius:2px;"></div>
<div class="t" style="right:465.5px;top:601.50px;font-size:12px;line-height:14px;color:#7d7d7d;font-weight:normal;text-align:right;">R$ 0,00</div>
<div class="t " style="left:294.3px;top:631.30px;font-size:11.6px;line-height:13px;color:#000;font-weight:normal;">Vlr.Tot. CBS Mon.ret</div>
<div class="b" style="left:419px;top:622.7px;width:121px;height:22.0px;background:#fff;border:1px solid #e6e6e6;box-sizing:border-box;border-radius:2px;"></div>
<div class="t" style="right:465.5px;top:626.20px;font-size:12px;line-height:14px;color:#7d7d7d;font-weight:normal;text-align:right;">R$ 0,00</div>
<div class="t " style="left:293px;top:656.10px;font-size:11.6px;line-height:13px;color:#000;font-weight:normal;">Vlr.Tot. CBS.Mon.ret ant</div>
<div class="b" style="left:419px;top:648px;width:121px;height:22px;background:#fff;border:1px solid #e6e6e6;box-sizing:border-box;border-radius:2px;"></div>
<div class="t" style="right:465.5px;top:651.50px;font-size:12px;line-height:14px;color:#7d7d7d;font-weight:normal;text-align:right;">R$ 0,00</div>
<div class="b" style="left:546px;top:493px;width:214px;height:23px;background:#4f7bbe;"></div>
<div class="t" style="left:546px;width:214px;top:496.30px;font-size:16px;line-height:18px;color:#fff;font-weight:bold;text-align:center;">CBS</div>
<div class="t " style="left:548px;top:526.40px;font-size:11.6px;line-height:13px;color:#000;font-weight:normal;">Vlr.Tot Dif.</div>
<div class="b" style="left:638.5px;top:520.8px;width:120.0px;height:22.0px;background:#fff;border:1px solid #e6e6e6;box-sizing:border-box;border-radius:2px;"></div>
<div class="t" style="right:247px;top:524.30px;font-size:12px;line-height:14px;color:#7d7d7d;font-weight:normal;text-align:right;">R$ 0,00</div>
<div class="t " style="left:548px;top:551.80px;font-size:11.6px;line-height:13px;color:#000;font-weight:normal;">Vlr.Tot Dev</div>
<div class="b" style="left:638.5px;top:545.7px;width:120.0px;height:22.0px;background:#fff;border:1px solid #e6e6e6;box-sizing:border-box;border-radius:2px;"></div>
<div class="t" style="right:247px;top:549.20px;font-size:12px;line-height:14px;color:#7d7d7d;font-weight:normal;text-align:right;">R$ 0,00</div>
<div class="b" style="left:766px;top:494px;width:219px;height:23px;background:#4f7bbe;"></div>
<div class="t" style="left:766px;width:219px;top:497.30px;font-size:16px;line-height:18px;color:#fff;font-weight:bold;text-align:center;">IS</div>
<div class="t " style="left:768.3px;top:529.10px;font-size:11.6px;line-height:13px;color:#000;font-weight:normal;">Valor IS</div>
<div class="b" style="left:865.5px;top:521.4px;width:119.5px;height:22.0px;background:#fff;border:1px solid #e6e6e6;box-sizing:border-box;border-radius:2px;"></div>
<div class="t" style="right:20px;top:525.00px;font-size:12px;line-height:14px;color:#7d7d7d;font-weight:normal;text-align:right;">R$ 0,00</div>
<div class="b" style="left:7px;top:684px;width:21px;height:21px;background:#f8f8f8;border:1px solid #e4e3dc;box-sizing:border-box;border-radius:4px;"></div>
<div class="b" style="left:32px;top:684px;width:21px;height:21px;background:#f8f8f8;border:1px solid #e4e3dc;box-sizing:border-box;border-radius:4px;"></div>
<div class="b" style="left:57px;top:684px;width:21px;height:21px;background:#f8f8f8;border:1px solid #e4e3dc;box-sizing:border-box;border-radius:4px;"></div>
<div class="b" style="left:82px;top:684px;width:21px;height:21px;background:#f8f8f8;border:1px solid #e4e3dc;box-sizing:border-box;border-radius:4px;"></div>
<div class="b" style="left:243px;top:684px;width:21px;height:21px;background:#f8f8f8;border:1px solid #e4e3dc;box-sizing:border-box;border-radius:4px;"></div>
<div class="t " style="left:111px;top:683.80px;font-size:12px;line-height:14px;color:#000;font-weight:normal;">Nº NF:</div>
<div class="b" style="left:150px;top:683px;width:86px;height:21px;background:#fff;"></div>
<div class="b" style="left:476px;top:683px;width:72px;height:22px;background:#f8f8f8;border:1px solid #e4e3dc;box-sizing:border-box;border-radius:4px;"></div>
<div class="t " style="left:508px;top:688.50px;font-size:11px;line-height:13px;color:#a3a3a3;font-weight:normal;"><u>I</u>ncluir</div>
<div class="b" style="left:556px;top:683px;width:87px;height:22px;background:#fdfdfd;border:1px solid #b9b9b9;box-sizing:border-box;border-radius:3px;"></div>
<div class="t " style="left:586.5px;top:688.50px;font-size:11px;line-height:13px;color:#000;font-weight:normal;">C<u>o</u>nfirmar</div>
<svg class="b" style="left:565px;top:686px" width="18" height="16"><path d="M0.5 8.5 L3 7 L6 11 L15.5 0.5 L17 2.5 L6.5 15.5 L5 15.5Z" fill="#2f6e6e"/></svg>
<div class="b" style="left:650px;top:683px;width:82px;height:22px;background:#fdfdfd;border:1px solid #b9b9b9;box-sizing:border-box;border-radius:3px;"></div>
<div class="t " style="left:679px;top:688.50px;font-size:11px;line-height:13px;color:#000;font-weight:normal;">Ca<u>n</u>celar</div>
<svg class="b" style="left:659px;top:686px" width="15" height="16"><path d="M2 1.5 L13 14.5 M13 1.5 L2 14.5" fill="none" stroke="#2f6e6e" stroke-width="3.8"/></svg>
<div class="b" style="left:741px;top:684px;width:74px;height:21px;background:#f8f8f8;border:1px solid #e4e3dc;box-sizing:border-box;border-radius:4px;"></div>
<div class="t " style="left:772.5px;top:689.00px;font-size:11px;line-height:13px;color:#a3a3a3;font-weight:normal;"><u>A</u>lterar</div>
<div class="b" style="left:823px;top:684px;width:72px;height:21px;background:#f8f8f8;border:1px solid #e4e3dc;box-sizing:border-box;border-radius:4px;"></div>
<div class="t " style="left:853px;top:689.00px;font-size:11px;line-height:13px;color:#a3a3a3;font-weight:normal;">E<u>x</u>cluir</div>
<div class="b" style="left:904px;top:684px;width:83px;height:21px;background:#f8f8f8;border:1px solid #e4e3dc;box-sizing:border-box;border-radius:4px;"></div>
<div class="t " style="left:932px;top:689.00px;font-size:11px;line-height:13px;color:#a3a3a3;font-weight:normal;"><u>E</u>xibir Log</div>
<div class="b" style="left:904px;top:711px;width:83px;height:21px;background:#f8f8f8;border:1px solid #e4e3dc;box-sizing:border-box;border-radius:4px;"></div>
<div class="t " style="left:938.5px;top:716.00px;font-size:11px;line-height:13px;color:#a3a3a3;font-weight:normal;"><u>F</u>echar</div>
<div class="t " style="left:5px;top:715.20px;font-size:12px;line-height:14px;color:#000;font-weight:normal;">Analise atual:</div>
<div class="b" style="left:85px;top:711px;width:811px;height:21px;background:#fff;border:1px solid #7a7a7a;box-sizing:border-box;border-radius:2px;"></div>
<svg class="b" style="left:882px;top:719px" width="10" height="6"><path d="M0.5 0.5 L4.75 4.75 L9 0.5" fill="none" stroke="#505050" stroke-width="1"/></svg>
<div class="b" style="left:0px;top:740px;width:997px;height:19px;background:#f0f0f0;border-top:1px solid #e3e3e3;box-sizing:border-box;"></div>
<svg class="b" style="left:984px;top:748px" width="12" height="12"><g fill="#a6a6a6"><rect x="9" y="1" width="2" height="2"/><rect x="6" y="4" width="2" height="2"/><rect x="9" y="4" width="2" height="2"/><rect x="3" y="7" width="2" height="2"/><rect x="6" y="7" width="2" height="2"/><rect x="9" y="7" width="2" height="2"/></g></svg>
</body></html>
